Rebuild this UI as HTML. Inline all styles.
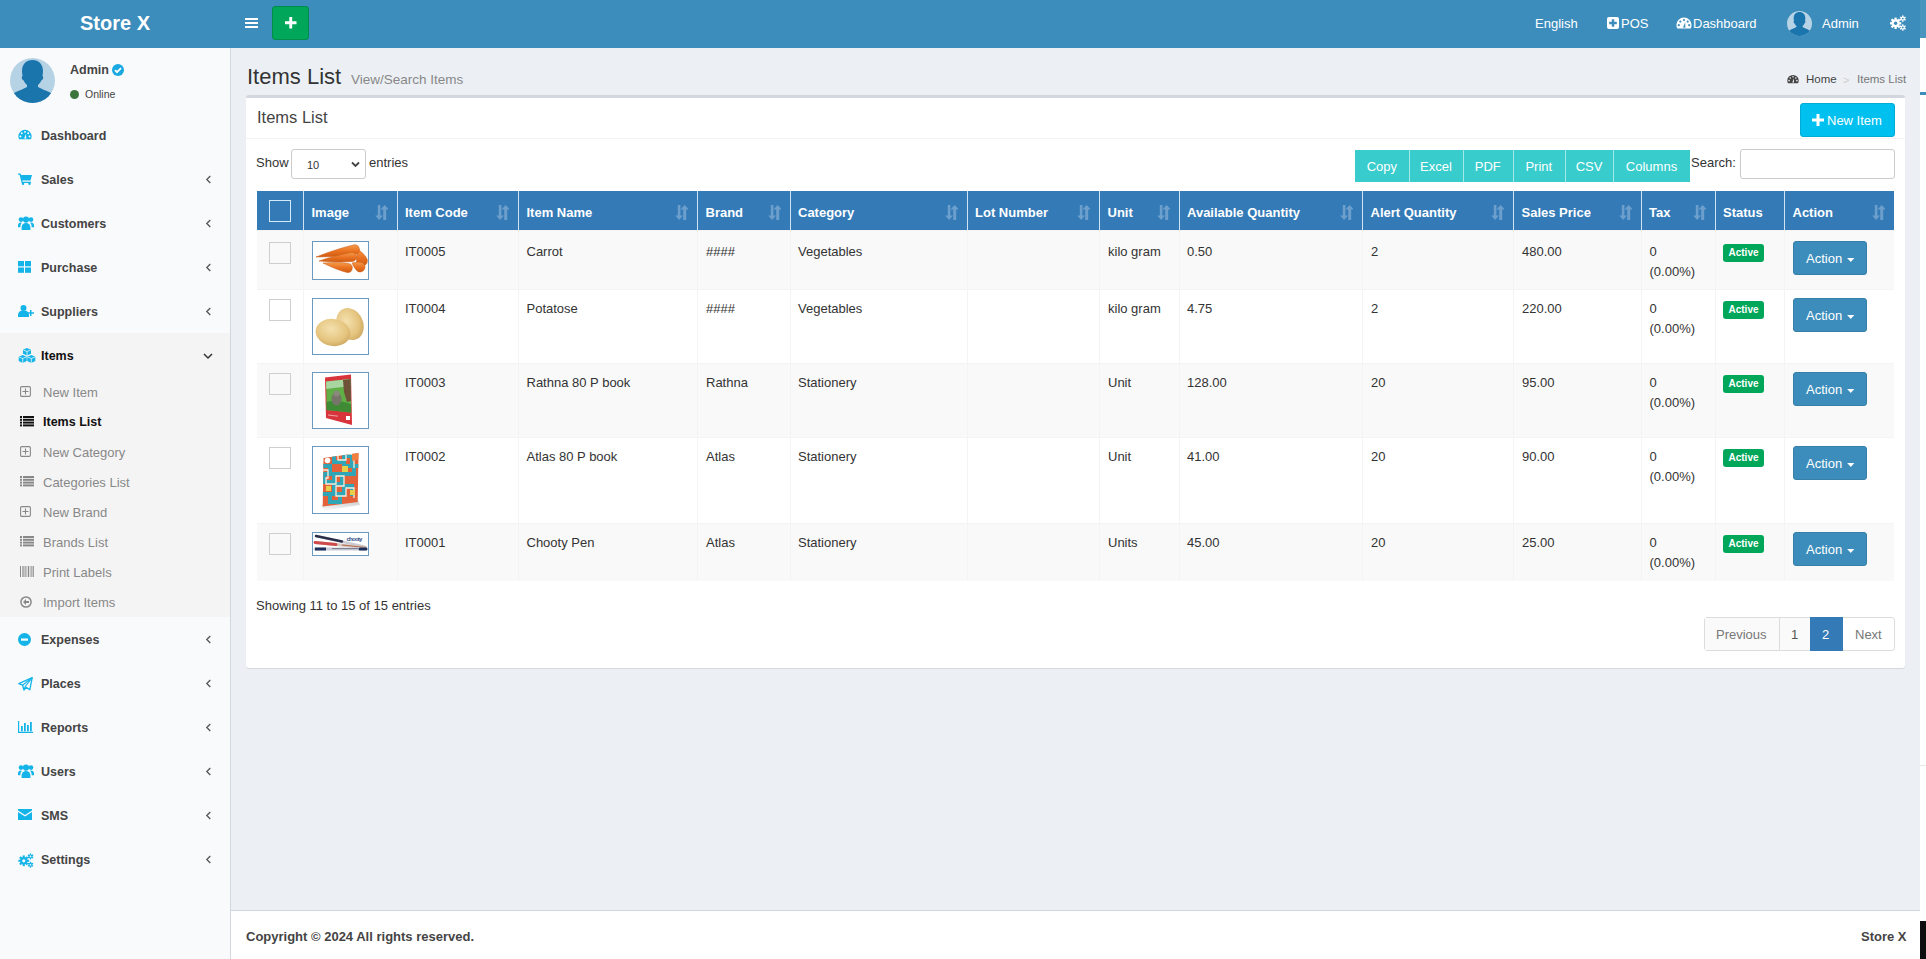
<!DOCTYPE html><html><head><meta charset="utf-8"><title>Items List</title><style>
*{box-sizing:border-box;margin:0;padding:0}
html,body{width:1926px;height:959px;overflow:hidden}
body{position:relative;background:#ecf0f5;font-family:"Liberation Sans",sans-serif;color:#333}
.a{position:absolute}
.t{line-height:1;white-space:nowrap}
</style></head><body><div class="a" style="left:0px;top:0px;width:1920px;height:48px;background:#3c8dbc"></div>
<div class="a t" style="left:80px;top:13px;font-size:20px;color:#fff;font-weight:bold;">Store X</div>
<div class="a" style="left:245px;top:18px;width:13px;height:2.4px;background:#fff"></div>
<div class="a" style="left:245px;top:22px;width:13px;height:2.4px;background:#fff"></div>
<div class="a" style="left:245px;top:26px;width:13px;height:2.4px;background:#fff"></div>
<div class="a" style="left:272px;top:6px;width:37px;height:34px;background:#00a65a;border-radius:3px;border:1px solid #008d4c"></div>
<svg class="a" style="left:285px;top:17px;" width="11.5" height="11.5" viewBox="0 0 12 12"><path d="M4.5 0h3v4.5H12v3H7.5V12h-3V7.5H0v-3h4.5z" fill="#fff"/></svg>
<div class="a t" style="left:1535px;top:17px;font-size:13px;color:#fff;font-weight:normal;">English</div>
<svg class="a" style="left:1607px;top:17px;" width="12" height="12" viewBox="0 0 12 12"><rect x="0" y="0" width="12" height="12" rx="2" fill="#fff"/><path d="M4.8 2.2h2.4v2.6h2.6v2.4H7.2v2.6H4.8V7.2H2.2V4.8h2.6z" fill="#3c8dbc"/></svg>
<div class="a t" style="left:1621px;top:17px;font-size:13px;color:#fff;font-weight:normal;">POS</div>
<svg class="a" style="left:1676px;top:17px;" width="16" height="12" viewBox="0 0 16 12"><path d="M8 0.5A7.6 7.6 0 0 0 0.4 8.1c0 1.3 .3 2.5 .9 3.4h13.4c.6-.9 .9-2.1 .9-3.4A7.6 7.6 0 0 0 8 0.5z" fill="#fff"/><circle cx="8" cy="3" r="1.1" fill="#3c8dbc"/><circle cx="4.3" cy="4.6" r="1.1" fill="#3c8dbc"/><circle cx="11.7" cy="4.6" r="1.1" fill="#3c8dbc"/><circle cx="2.8" cy="8.2" r="1.1" fill="#3c8dbc"/><circle cx="13.2" cy="8.2" r="1.1" fill="#3c8dbc"/><path d="M7 10.5L9.2 5.2L9.4 10.8z" fill="#3c8dbc"/></svg>
<div class="a t" style="left:1693px;top:17px;font-size:13px;color:#fff;font-weight:normal;">Dashboard</div>
<svg class="a" style="left:1787px;top:11px;" width="25" height="25" viewBox="0 0 45 45"><defs><clipPath id="c25"><circle cx="22.5" cy="22.5" r="22.5"/></clipPath></defs><g clip-path="url(#c25)"><rect width="45" height="45" fill="#b6d3e6"/><path d="M22.5 2C16 2 12 6.5 12 13c0 2 .2 3.5 .6 5-.8 .2-1 1-.7 2.2.3 1.2 1 2 1.7 2.1.8 2 2 3.6 3.4 4.7V29c-3 1.8-8 3.6-12 5.5C3 35.5 2 37 2 39v6h41v-6c0-2-1-3.5-3-4.5-4-1.9-9-3.7-12-5.5v-2c1.4-1.1 2.6-2.7 3.4-4.7.7-.1 1.4-.9 1.7-2.1.3-1.2.1-2-.7-2.2.4-1.5.6-3 .6-5C33 6.5 29 2 22.5 2z" fill="#1a75ad"/></g></svg>
<div class="a t" style="left:1822px;top:17px;font-size:13px;color:#fff;font-weight:normal;">Admin</div>
<svg class="a" style="left:1890px;top:15px;" width="16" height="16" viewBox="0 0 16 16"><circle cx="5.6" cy="8.3" r="4.0" fill="#fff"/><rect x="4.449999999999999" y="2.6000000000000005" width="2.3" height="2.2" fill="#fff" transform="rotate(0.0 5.6 8.3)"/><rect x="4.449999999999999" y="2.6000000000000005" width="2.3" height="2.2" fill="#fff" transform="rotate(45.0 5.6 8.3)"/><rect x="4.449999999999999" y="2.6000000000000005" width="2.3" height="2.2" fill="#fff" transform="rotate(90.0 5.6 8.3)"/><rect x="4.449999999999999" y="2.6000000000000005" width="2.3" height="2.2" fill="#fff" transform="rotate(135.0 5.6 8.3)"/><rect x="4.449999999999999" y="2.6000000000000005" width="2.3" height="2.2" fill="#fff" transform="rotate(180.0 5.6 8.3)"/><rect x="4.449999999999999" y="2.6000000000000005" width="2.3" height="2.2" fill="#fff" transform="rotate(225.0 5.6 8.3)"/><rect x="4.449999999999999" y="2.6000000000000005" width="2.3" height="2.2" fill="#fff" transform="rotate(270.0 5.6 8.3)"/><rect x="4.449999999999999" y="2.6000000000000005" width="2.3" height="2.2" fill="#fff" transform="rotate(315.0 5.6 8.3)"/><circle cx="5.6" cy="8.3" r="1.7" fill="#3c8dbc"/><circle cx="12.8" cy="3.6" r="2.1" fill="#fff"/><rect x="12.100000000000001" y="0.3999999999999999" width="1.4" height="1.6" fill="#fff" transform="rotate(0.0 12.8 3.6)"/><rect x="12.100000000000001" y="0.3999999999999999" width="1.4" height="1.6" fill="#fff" transform="rotate(60.0 12.8 3.6)"/><rect x="12.100000000000001" y="0.3999999999999999" width="1.4" height="1.6" fill="#fff" transform="rotate(120.0 12.8 3.6)"/><rect x="12.100000000000001" y="0.3999999999999999" width="1.4" height="1.6" fill="#fff" transform="rotate(180.0 12.8 3.6)"/><rect x="12.100000000000001" y="0.3999999999999999" width="1.4" height="1.6" fill="#fff" transform="rotate(240.0 12.8 3.6)"/><rect x="12.100000000000001" y="0.3999999999999999" width="1.4" height="1.6" fill="#fff" transform="rotate(300.0 12.8 3.6)"/><circle cx="12.8" cy="3.6" r="0.9" fill="#3c8dbc"/><circle cx="12.8" cy="12.5" r="2.1" fill="#fff"/><rect x="12.100000000000001" y="9.3" width="1.4" height="1.6" fill="#fff" transform="rotate(0.0 12.8 12.5)"/><rect x="12.100000000000001" y="9.3" width="1.4" height="1.6" fill="#fff" transform="rotate(60.0 12.8 12.5)"/><rect x="12.100000000000001" y="9.3" width="1.4" height="1.6" fill="#fff" transform="rotate(120.0 12.8 12.5)"/><rect x="12.100000000000001" y="9.3" width="1.4" height="1.6" fill="#fff" transform="rotate(180.0 12.8 12.5)"/><rect x="12.100000000000001" y="9.3" width="1.4" height="1.6" fill="#fff" transform="rotate(240.0 12.8 12.5)"/><rect x="12.100000000000001" y="9.3" width="1.4" height="1.6" fill="#fff" transform="rotate(300.0 12.8 12.5)"/><circle cx="12.8" cy="12.5" r="0.9" fill="#3c8dbc"/></svg>
<div class="a" style="left:1920px;top:0px;width:6px;height:38px;background:#4896be"></div>
<div class="a" style="left:1920px;top:38px;width:6px;height:921px;background:#fff"></div>
<div class="a" style="left:1920px;top:92px;width:6px;height:3px;background:#3c8dbc"></div>
<div class="a" style="left:1920px;top:765px;width:6px;height:1px;background:#e6e6e6"></div>
<div class="a" style="left:1920px;top:921px;width:6px;height:38px;background:#0d0d0f"></div>
<div class="a" style="left:0px;top:48px;width:230px;height:911px;background:#f9fafc"></div>
<div class="a" style="left:230px;top:48px;width:1px;height:911px;background:#d2d6de"></div>
<div class="a" style="left:0px;top:333px;width:230px;height:284px;background:#f4f4f5"></div>
<svg class="a" style="left:10px;top:58px;" width="45" height="45" viewBox="0 0 45 45"><defs><clipPath id="c45"><circle cx="22.5" cy="22.5" r="22.5"/></clipPath></defs><g clip-path="url(#c45)"><rect width="45" height="45" fill="#b6d3e6"/><path d="M22.5 2C16 2 12 6.5 12 13c0 2 .2 3.5 .6 5-.8 .2-1 1-.7 2.2.3 1.2 1 2 1.7 2.1.8 2 2 3.6 3.4 4.7V29c-3 1.8-8 3.6-12 5.5C3 35.5 2 37 2 39v6h41v-6c0-2-1-3.5-3-4.5-4-1.9-9-3.7-12-5.5v-2c1.4-1.1 2.6-2.7 3.4-4.7.7-.1 1.4-.9 1.7-2.1.3-1.2.1-2-.7-2.2.4-1.5.6-3 .6-5C33 6.5 29 2 22.5 2z" fill="#1a75ad"/></g></svg>
<div class="a t" style="left:70px;top:64px;font-size:12.5px;color:#444;font-weight:bold;">Admin</div>
<svg class="a" style="left:112px;top:64px;" width="12" height="12" viewBox="0 0 12 12"><circle cx="6" cy="6" r="6" fill="#1aa8e0"/><path d="M3 6.2l2 2 4-4" stroke="#fff" stroke-width="1.8" fill="none"/></svg>
<svg class="a" style="left:70px;top:90px;" width="9" height="9" viewBox="0 0 9 9"><circle cx="4.5" cy="4.5" r="4.5" fill="#3c763d"/></svg>
<div class="a t" style="left:85px;top:89px;font-size:10.5px;color:#444;font-weight:normal;">Online</div>
<svg class="a" style="left:18px;top:129px;" width="14" height="11" viewBox="0 0 16 12"><path d="M8 0.5A7.6 7.6 0 0 0 0.4 8.1c0 1.3 .3 2.5 .9 3.4h13.4c.6-.9 .9-2.1 .9-3.4A7.6 7.6 0 0 0 8 0.5z" fill="#14b4e8"/><circle cx="8" cy="3" r="1.1" fill="#f9fafc"/><circle cx="4.3" cy="4.6" r="1.1" fill="#f9fafc"/><circle cx="11.7" cy="4.6" r="1.1" fill="#f9fafc"/><circle cx="2.8" cy="8.2" r="1.1" fill="#f9fafc"/><circle cx="13.2" cy="8.2" r="1.1" fill="#f9fafc"/><path d="M7 10.5L9.2 5.2L9.4 10.8z" fill="#f9fafc"/></svg>
<div class="a t" style="left:41px;top:130px;font-size:12.5px;color:#444;font-weight:bold;">Dashboard</div>
<svg class="a" style="left:18px;top:173px;" width="14" height="12" viewBox="0 0 14 12"><path d="M0 0.5h2.5l.6 1.5H14l-1.5 5.5H4.2l.4 1.2H13v1.3H3.6L1.6 1.8H0z" fill="#14b4e8"/><circle cx="5" cy="10.8" r="1.2" fill="#14b4e8"/><circle cx="11.5" cy="10.8" r="1.2" fill="#14b4e8"/></svg>
<div class="a t" style="left:41px;top:174px;font-size:12.5px;color:#444;font-weight:bold;">Sales</div>
<svg class="a" style="left:204.5px;top:174.5px;" width="7" height="9" viewBox="0 0 7 9"><path d="M5.3 1L1.8 4.5l3.5 3.5" stroke="#555" stroke-width="1.3" fill="none"/></svg>
<svg class="a" style="left:18px;top:216px;" width="16" height="14" viewBox="0 0 16 14"><circle cx="8" cy="3.6" r="3.1" fill="#14b4e8"/><circle cx="3" cy="3.6" r="2.3" fill="#14b4e8"/><circle cx="13" cy="3.6" r="2.3" fill="#14b4e8"/><path d="M3.6 14v-2.6a4.4 4.4 0 0 1 8.8 0V14z" fill="#14b4e8"/><path d="M0 11.2V9.3a2.7 2.7 0 0 1 3.8-2.5 5.5 5.5 0 0 0-1.4 4.4z" fill="#14b4e8"/><path d="M16 11.2V9.3a2.7 2.7 0 0 0-3.8-2.5 5.5 5.5 0 0 1 1.4 4.4z" fill="#14b4e8"/></svg>
<div class="a t" style="left:41px;top:218px;font-size:12.5px;color:#444;font-weight:bold;">Customers</div>
<svg class="a" style="left:204.5px;top:218.5px;" width="7" height="9" viewBox="0 0 7 9"><path d="M5.3 1L1.8 4.5l3.5 3.5" stroke="#555" stroke-width="1.3" fill="none"/></svg>
<svg class="a" style="left:18px;top:261px;" width="13" height="12" viewBox="0 0 13 12"><rect x="0" y="0" width="6" height="5.3" fill="#14b4e8"/><rect x="7" y="0" width="6" height="5.3" fill="#14b4e8"/><rect x="0" y="6.5" width="6" height="5.3" fill="#14b4e8"/><rect x="7" y="6.5" width="6" height="5.3" fill="#14b4e8"/></svg>
<div class="a t" style="left:41px;top:262px;font-size:12.5px;color:#444;font-weight:bold;">Purchase</div>
<svg class="a" style="left:204.5px;top:262.5px;" width="7" height="9" viewBox="0 0 7 9"><path d="M5.3 1L1.8 4.5l3.5 3.5" stroke="#555" stroke-width="1.3" fill="none"/></svg>
<svg class="a" style="left:18px;top:305px;" width="16" height="12" viewBox="0 0 16 12"><circle cx="5.5" cy="3" r="3" fill="#14b4e8"/><path d="M0 12V10a4.5 4.5 0 0 1 4.5-4.5h2A4.5 4.5 0 0 1 11 10v2z" fill="#14b4e8"/><path d="M12 5h1.5v2.3H16v1.4h-2.5V11H12V8.7H9.7V7.3H12z" fill="#14b4e8"/></svg>
<div class="a t" style="left:41px;top:306px;font-size:12.5px;color:#444;font-weight:bold;">Suppliers</div>
<svg class="a" style="left:204.5px;top:306.5px;" width="7" height="9" viewBox="0 0 7 9"><path d="M5.3 1L1.8 4.5l3.5 3.5" stroke="#555" stroke-width="1.3" fill="none"/></svg>
<svg class="a" style="left:18px;top:348px;" width="18" height="16" viewBox="0 0 18 16"><path d="M9 0l4 1.7v4.1L9 7.5 5 5.8V1.7z" fill="#14b4e8"/><path d="M4.7 7l4 1.7v4.3L4.7 15 .7 13V8.7z" fill="#14b4e8"/><path d="M13.3 7l4 1.7v4.3l-4 2-4-2V8.7z" fill="#14b4e8"/><path d="M5.4 2l3.6 1.5 3.6-1.5M1.1 9l3.6 1.5 3.6-1.5M9.7 9l3.6 1.5 3.6-1.5M9 3.5v4M4.7 10.5v4.5M13.3 10.5v4.5" stroke="#f4f4f5" stroke-width=".8" fill="none"/></svg>
<div class="a t" style="left:41px;top:350px;font-size:12.5px;color:#111;font-weight:bold;">Items</div>
<svg class="a" style="left:203px;top:351.5px;" width="10" height="8" viewBox="0 0 10 8"><path d="M1 2l4 4 4-4" stroke="#333" stroke-width="1.5" fill="none"/></svg>
<svg class="a" style="left:18px;top:633px;" width="13" height="13" viewBox="0 0 13 13"><circle cx="6.5" cy="6.5" r="6.5" fill="#14b4e8"/><rect x="3" y="5.5" width="7" height="2.2" fill="#fff"/></svg>
<div class="a t" style="left:41px;top:634px;font-size:12.5px;color:#444;font-weight:bold;">Expenses</div>
<svg class="a" style="left:204.5px;top:634.5px;" width="7" height="9" viewBox="0 0 7 9"><path d="M5.3 1L1.8 4.5l3.5 3.5" stroke="#555" stroke-width="1.3" fill="none"/></svg>
<svg class="a" style="left:18px;top:677px;" width="15" height="14" viewBox="0 0 15 14"><path d="M14.2 .6L.8 6.6l3.8 1.6 1.4 4.8 2.2-2.8 3.6 2.6z" fill="none" stroke="#14b4e8" stroke-width="1.3" stroke-linejoin="round"/><path d="M4.6 8.2L14.2 .6 7.2 9.4l-1.2 3.6" fill="none" stroke="#14b4e8" stroke-width="1.1"/></svg>
<div class="a t" style="left:41px;top:678px;font-size:12.5px;color:#444;font-weight:bold;">Places</div>
<svg class="a" style="left:204.5px;top:678.5px;" width="7" height="9" viewBox="0 0 7 9"><path d="M5.3 1L1.8 4.5l3.5 3.5" stroke="#555" stroke-width="1.3" fill="none"/></svg>
<svg class="a" style="left:18px;top:721px;" width="15" height="12" viewBox="0 0 15 12"><path d="M.6 0v11.4H15" fill="none" stroke="#14b4e8" stroke-width="1.2"/><rect x="3" y="5" width="1.8" height="5.3" fill="#14b4e8"/><rect x="6" y="2" width="1.8" height="8.3" fill="#14b4e8"/><rect x="9" y="4" width="1.8" height="6.3" fill="#14b4e8"/><rect x="12" y="1" width="1.8" height="9.3" fill="#14b4e8"/></svg>
<div class="a t" style="left:41px;top:722px;font-size:12.5px;color:#444;font-weight:bold;">Reports</div>
<svg class="a" style="left:204.5px;top:722.5px;" width="7" height="9" viewBox="0 0 7 9"><path d="M5.3 1L1.8 4.5l3.5 3.5" stroke="#555" stroke-width="1.3" fill="none"/></svg>
<svg class="a" style="left:18px;top:764px;" width="16" height="14" viewBox="0 0 16 14"><circle cx="8" cy="3.6" r="3.1" fill="#14b4e8"/><circle cx="3" cy="3.6" r="2.3" fill="#14b4e8"/><circle cx="13" cy="3.6" r="2.3" fill="#14b4e8"/><path d="M3.6 14v-2.6a4.4 4.4 0 0 1 8.8 0V14z" fill="#14b4e8"/><path d="M0 11.2V9.3a2.7 2.7 0 0 1 3.8-2.5 5.5 5.5 0 0 0-1.4 4.4z" fill="#14b4e8"/><path d="M16 11.2V9.3a2.7 2.7 0 0 0-3.8-2.5 5.5 5.5 0 0 1 1.4 4.4z" fill="#14b4e8"/></svg>
<div class="a t" style="left:41px;top:766px;font-size:12.5px;color:#444;font-weight:bold;">Users</div>
<svg class="a" style="left:204.5px;top:766.5px;" width="7" height="9" viewBox="0 0 7 9"><path d="M5.3 1L1.8 4.5l3.5 3.5" stroke="#555" stroke-width="1.3" fill="none"/></svg>
<svg class="a" style="left:18px;top:809px;" width="14" height="11" viewBox="0 0 14 11"><path d="M0 0h14v1.5L7 6 0 1.5z" fill="#14b4e8"/><path d="M0 3l7 4.5L14 3v8H0z" fill="#14b4e8"/></svg>
<div class="a t" style="left:41px;top:810px;font-size:12.5px;color:#444;font-weight:bold;">SMS</div>
<svg class="a" style="left:204.5px;top:810.5px;" width="7" height="9" viewBox="0 0 7 9"><path d="M5.3 1L1.8 4.5l3.5 3.5" stroke="#555" stroke-width="1.3" fill="none"/></svg>
<svg class="a" style="left:18px;top:853px;" width="16" height="15" viewBox="0 0 16 16"><circle cx="5.6" cy="8.3" r="4.0" fill="#14b4e8"/><rect x="4.449999999999999" y="2.6000000000000005" width="2.3" height="2.2" fill="#14b4e8" transform="rotate(0.0 5.6 8.3)"/><rect x="4.449999999999999" y="2.6000000000000005" width="2.3" height="2.2" fill="#14b4e8" transform="rotate(45.0 5.6 8.3)"/><rect x="4.449999999999999" y="2.6000000000000005" width="2.3" height="2.2" fill="#14b4e8" transform="rotate(90.0 5.6 8.3)"/><rect x="4.449999999999999" y="2.6000000000000005" width="2.3" height="2.2" fill="#14b4e8" transform="rotate(135.0 5.6 8.3)"/><rect x="4.449999999999999" y="2.6000000000000005" width="2.3" height="2.2" fill="#14b4e8" transform="rotate(180.0 5.6 8.3)"/><rect x="4.449999999999999" y="2.6000000000000005" width="2.3" height="2.2" fill="#14b4e8" transform="rotate(225.0 5.6 8.3)"/><rect x="4.449999999999999" y="2.6000000000000005" width="2.3" height="2.2" fill="#14b4e8" transform="rotate(270.0 5.6 8.3)"/><rect x="4.449999999999999" y="2.6000000000000005" width="2.3" height="2.2" fill="#14b4e8" transform="rotate(315.0 5.6 8.3)"/><circle cx="5.6" cy="8.3" r="1.7" fill="#f9fafc"/><circle cx="12.8" cy="3.6" r="2.1" fill="#14b4e8"/><rect x="12.100000000000001" y="0.3999999999999999" width="1.4" height="1.6" fill="#14b4e8" transform="rotate(0.0 12.8 3.6)"/><rect x="12.100000000000001" y="0.3999999999999999" width="1.4" height="1.6" fill="#14b4e8" transform="rotate(60.0 12.8 3.6)"/><rect x="12.100000000000001" y="0.3999999999999999" width="1.4" height="1.6" fill="#14b4e8" transform="rotate(120.0 12.8 3.6)"/><rect x="12.100000000000001" y="0.3999999999999999" width="1.4" height="1.6" fill="#14b4e8" transform="rotate(180.0 12.8 3.6)"/><rect x="12.100000000000001" y="0.3999999999999999" width="1.4" height="1.6" fill="#14b4e8" transform="rotate(240.0 12.8 3.6)"/><rect x="12.100000000000001" y="0.3999999999999999" width="1.4" height="1.6" fill="#14b4e8" transform="rotate(300.0 12.8 3.6)"/><circle cx="12.8" cy="3.6" r="0.9" fill="#f9fafc"/><circle cx="12.8" cy="12.5" r="2.1" fill="#14b4e8"/><rect x="12.100000000000001" y="9.3" width="1.4" height="1.6" fill="#14b4e8" transform="rotate(0.0 12.8 12.5)"/><rect x="12.100000000000001" y="9.3" width="1.4" height="1.6" fill="#14b4e8" transform="rotate(60.0 12.8 12.5)"/><rect x="12.100000000000001" y="9.3" width="1.4" height="1.6" fill="#14b4e8" transform="rotate(120.0 12.8 12.5)"/><rect x="12.100000000000001" y="9.3" width="1.4" height="1.6" fill="#14b4e8" transform="rotate(180.0 12.8 12.5)"/><rect x="12.100000000000001" y="9.3" width="1.4" height="1.6" fill="#14b4e8" transform="rotate(240.0 12.8 12.5)"/><rect x="12.100000000000001" y="9.3" width="1.4" height="1.6" fill="#14b4e8" transform="rotate(300.0 12.8 12.5)"/><circle cx="12.8" cy="12.5" r="0.9" fill="#f9fafc"/></svg>
<div class="a t" style="left:41px;top:854px;font-size:12.5px;color:#444;font-weight:bold;">Settings</div>
<svg class="a" style="left:204.5px;top:854.5px;" width="7" height="9" viewBox="0 0 7 9"><path d="M5.3 1L1.8 4.5l3.5 3.5" stroke="#555" stroke-width="1.3" fill="none"/></svg>
<svg class="a" style="left:20px;top:386px;" width="11" height="11" viewBox="0 0 11 11"><rect x=".6" y=".6" width="9.8" height="9.8" rx="1.2" fill="none" stroke="#888" stroke-width="1.1"/><path d="M5.5 2.5v6M2.5 5.5h6" stroke="#888" stroke-width="1.1"/></svg>
<div class="a t" style="left:43px;top:386px;font-size:13px;color:#888;font-weight:normal;">New Item</div>
<svg class="a" style="left:20px;top:416px;" width="14" height="11" viewBox="0 0 14 11"><rect x="0" y="0.0" width="2" height="2" fill="#111"/><rect x="3" y="0.0" width="11" height="2" fill="#111"/><rect x="0" y="2.8" width="2" height="2" fill="#111"/><rect x="3" y="2.8" width="11" height="2" fill="#111"/><rect x="0" y="5.6" width="2" height="2" fill="#111"/><rect x="3" y="5.6" width="11" height="2" fill="#111"/><rect x="0" y="8.399999999999999" width="2" height="2" fill="#111"/><rect x="3" y="8.399999999999999" width="11" height="2" fill="#111"/></svg>
<div class="a t" style="left:43px;top:416px;font-size:12.5px;color:#111;font-weight:bold;">Items List</div>
<svg class="a" style="left:20px;top:446px;" width="11" height="11" viewBox="0 0 11 11"><rect x=".6" y=".6" width="9.8" height="9.8" rx="1.2" fill="none" stroke="#888" stroke-width="1.1"/><path d="M5.5 2.5v6M2.5 5.5h6" stroke="#888" stroke-width="1.1"/></svg>
<div class="a t" style="left:43px;top:446px;font-size:13px;color:#888;font-weight:normal;">New Category</div>
<svg class="a" style="left:20px;top:476px;" width="14" height="11" viewBox="0 0 14 11"><rect x="0" y="0.0" width="2" height="2" fill="#888"/><rect x="3" y="0.0" width="11" height="2" fill="#888"/><rect x="0" y="2.8" width="2" height="2" fill="#888"/><rect x="3" y="2.8" width="11" height="2" fill="#888"/><rect x="0" y="5.6" width="2" height="2" fill="#888"/><rect x="3" y="5.6" width="11" height="2" fill="#888"/><rect x="0" y="8.399999999999999" width="2" height="2" fill="#888"/><rect x="3" y="8.399999999999999" width="11" height="2" fill="#888"/></svg>
<div class="a t" style="left:43px;top:476px;font-size:13px;color:#888;font-weight:normal;">Categories List</div>
<svg class="a" style="left:20px;top:506px;" width="11" height="11" viewBox="0 0 11 11"><rect x=".6" y=".6" width="9.8" height="9.8" rx="1.2" fill="none" stroke="#888" stroke-width="1.1"/><path d="M5.5 2.5v6M2.5 5.5h6" stroke="#888" stroke-width="1.1"/></svg>
<div class="a t" style="left:43px;top:506px;font-size:13px;color:#888;font-weight:normal;">New Brand</div>
<svg class="a" style="left:20px;top:536px;" width="14" height="11" viewBox="0 0 14 11"><rect x="0" y="0.0" width="2" height="2" fill="#888"/><rect x="3" y="0.0" width="11" height="2" fill="#888"/><rect x="0" y="2.8" width="2" height="2" fill="#888"/><rect x="3" y="2.8" width="11" height="2" fill="#888"/><rect x="0" y="5.6" width="2" height="2" fill="#888"/><rect x="3" y="5.6" width="11" height="2" fill="#888"/><rect x="0" y="8.399999999999999" width="2" height="2" fill="#888"/><rect x="3" y="8.399999999999999" width="11" height="2" fill="#888"/></svg>
<div class="a t" style="left:43px;top:536px;font-size:13px;color:#888;font-weight:normal;">Brands List</div>
<svg class="a" style="left:20px;top:566px;" width="14" height="11" viewBox="0 0 14 11"><rect x="0" y="0" width="1" height="11" fill="#888"/><rect x="2" y="0" width="0.6" height="11" fill="#888"/><rect x="3.4" y="0" width="1" height="11" fill="#888"/><rect x="5.2" y="0" width="0.6" height="11" fill="#888"/><rect x="6.6" y="0" width="0.6" height="11" fill="#888"/><rect x="8" y="0" width="1" height="11" fill="#888"/><rect x="9.8" y="0" width="0.6" height="11" fill="#888"/><rect x="11.2" y="0" width="0.6" height="11" fill="#888"/><rect x="12.6" y="0" width="1.2" height="11" fill="#888"/></svg>
<div class="a t" style="left:43px;top:566px;font-size:13px;color:#888;font-weight:normal;">Print Labels</div>
<svg class="a" style="left:20px;top:596px;" width="12" height="12" viewBox="0 0 12 12"><circle cx="6" cy="6" r="5.1" fill="none" stroke="#888" stroke-width="1.5"/><path d="M3 6l3-3v2h3v2H6v2z" fill="#888"/></svg>
<div class="a t" style="left:43px;top:596px;font-size:13px;color:#888;font-weight:normal;">Import Items</div>
<div class="a t" style="left:247px;top:66px;font-size:22px;color:#333;font-weight:normal;">Items List</div>
<div class="a t" style="left:351px;top:73px;font-size:13.5px;color:#888;font-weight:normal;">View/Search Items</div>
<svg class="a" style="left:1787px;top:74px;" width="12" height="10" viewBox="0 0 16 12"><path d="M8 0.5A7.6 7.6 0 0 0 0.4 8.1c0 1.3 .3 2.5 .9 3.4h13.4c.6-.9 .9-2.1 .9-3.4A7.6 7.6 0 0 0 8 0.5z" fill="#444"/><circle cx="8" cy="3" r="1.1" fill="#ecf0f5"/><circle cx="4.3" cy="4.6" r="1.1" fill="#ecf0f5"/><circle cx="11.7" cy="4.6" r="1.1" fill="#ecf0f5"/><circle cx="2.8" cy="8.2" r="1.1" fill="#ecf0f5"/><circle cx="13.2" cy="8.2" r="1.1" fill="#ecf0f5"/><path d="M7 10.5L9.2 5.2L9.4 10.8z" fill="#ecf0f5"/></svg>
<div class="a t" style="left:1806px;top:74px;font-size:11.5px;color:#444;font-weight:normal;">Home</div>
<div class="a t" style="left:1843px;top:74.5px;font-size:11px;color:#ccc;font-weight:normal;">&gt;</div>
<div class="a t" style="left:1857px;top:74px;font-size:11.5px;color:#777;font-weight:normal;">Items List</div>
<div class="a" style="left:246px;top:95px;width:1659px;height:573px;background:#fff;border-top:3px solid #d2d6de;border-radius:3px;box-shadow:0 1px 1px rgba(0,0,0,.1)"></div>
<div class="a t" style="left:257px;top:109px;font-size:16.5px;color:#444;font-weight:normal;">Items List</div>
<div class="a" style="left:246px;top:138px;width:1659px;height:1px;background:#f4f4f4"></div>
<div class="a" style="left:1800px;top:103px;width:95px;height:34px;background:#00c0ef;border:1px solid #00acd6;border-radius:3px"></div>
<svg class="a" style="left:1812px;top:113.5px;" width="12" height="12" viewBox="0 0 12 12"><path d="M4.5 0h3v4.5H12v3H7.5V12h-3V7.5H0v-3h4.5z" fill="#fff"/></svg>
<div class="a t" style="left:1827px;top:114px;font-size:13px;color:#fff;font-weight:normal;">New Item</div>
<div class="a t" style="left:256px;top:156px;font-size:13px;color:#333;font-weight:normal;">Show</div>
<div class="a" style="left:291px;top:149px;width:75px;height:30px;background:#fff;border:1px solid #cbcbcb;border-radius:3px"></div>
<div class="a t" style="left:307px;top:160px;font-size:11px;color:#333;font-weight:normal;">10</div>
<svg class="a" style="left:351px;top:161px;" width="9" height="7" viewBox="0 0 9 7"><path d="M1 1.5l3.5 3.5L8 1.5" stroke="#444" stroke-width="1.8" fill="none"/></svg>
<div class="a t" style="left:369px;top:156px;font-size:13px;color:#333;font-weight:normal;">entries</div>
<div class="a" style="left:1355px;top:150px;width:335px;height:32px;background:#39cccc"></div>
<div class="a" style="left:1409px;top:150px;width:1px;height:32px;background:rgba(255,255,255,.55)"></div>
<div class="a" style="left:1463px;top:150px;width:1px;height:32px;background:rgba(255,255,255,.55)"></div>
<div class="a" style="left:1512.5px;top:150px;width:1px;height:32px;background:rgba(255,255,255,.55)"></div>
<div class="a" style="left:1565px;top:150px;width:1px;height:32px;background:rgba(255,255,255,.55)"></div>
<div class="a" style="left:1613px;top:150px;width:1px;height:32px;background:rgba(255,255,255,.55)"></div>
<div class="a t" style="left:1354.8px;top:160px;width:54.200000000000045px;text-align:center;font-size:13px;color:#fff">Copy</div>
<div class="a t" style="left:1409px;top:160px;width:54px;text-align:center;font-size:13px;color:#fff">Excel</div>
<div class="a t" style="left:1463px;top:160px;width:49.5px;text-align:center;font-size:13px;color:#fff">PDF</div>
<div class="a t" style="left:1512.5px;top:160px;width:52.5px;text-align:center;font-size:13px;color:#fff">Print</div>
<div class="a t" style="left:1565px;top:160px;width:48px;text-align:center;font-size:13px;color:#fff">CSV</div>
<div class="a t" style="left:1613px;top:160px;width:77px;text-align:center;font-size:13px;color:#fff">Columns</div>
<div class="a t" style="left:1691px;top:156px;font-size:13px;color:#333;font-weight:normal;">Search:</div>
<div class="a" style="left:1740px;top:149px;width:155px;height:30px;background:#fff;border:1px solid #cbcbcb;border-radius:3px"></div>
<div class="a" style="left:257px;top:191px;width:1637px;height:39px;background:#337ab7"></div>
<div class="a" style="left:303px;top:191px;width:1px;height:39px;background:#cfe3f3"></div>
<div class="a" style="left:396.5px;top:191px;width:1px;height:39px;background:#cfe3f3"></div>
<div class="a" style="left:518px;top:191px;width:1px;height:39px;background:#cfe3f3"></div>
<div class="a" style="left:697px;top:191px;width:1px;height:39px;background:#cfe3f3"></div>
<div class="a" style="left:789.5px;top:191px;width:1px;height:39px;background:#cfe3f3"></div>
<div class="a" style="left:966.5px;top:191px;width:1px;height:39px;background:#cfe3f3"></div>
<div class="a" style="left:1099px;top:191px;width:1px;height:39px;background:#cfe3f3"></div>
<div class="a" style="left:1178.5px;top:191px;width:1px;height:39px;background:#cfe3f3"></div>
<div class="a" style="left:1362px;top:191px;width:1px;height:39px;background:#cfe3f3"></div>
<div class="a" style="left:1513px;top:191px;width:1px;height:39px;background:#cfe3f3"></div>
<div class="a" style="left:1640.5px;top:191px;width:1px;height:39px;background:#cfe3f3"></div>
<div class="a" style="left:1714.5px;top:191px;width:1px;height:39px;background:#cfe3f3"></div>
<div class="a" style="left:1784px;top:191px;width:1px;height:39px;background:#cfe3f3"></div>
<div class="a" style="left:269px;top:200px;width:22px;height:22px;border:1.3px solid #d5eafa"></div>
<div class="a t" style="left:311.5px;top:206px;font-size:13px;color:#fff;font-weight:bold;">Image</div>
<svg class="a" style="left:374.5px;top:205px;" width="13" height="15" viewBox="0 0 13 15"><path d="M2.8 0h2.6v10.5H8L4.1 15 .2 10.5h2.6z" fill="#6c9fcc"/><path d="M8.2 15h3v-10.5H14L9.7 0 5.4 4.5h2.8z" fill="#6c9fcc"/></svg>
<div class="a t" style="left:405.0px;top:206px;font-size:13px;color:#fff;font-weight:bold;">Item Code</div>
<svg class="a" style="left:496px;top:205px;" width="13" height="15" viewBox="0 0 13 15"><path d="M2.8 0h2.6v10.5H8L4.1 15 .2 10.5h2.6z" fill="#6c9fcc"/><path d="M8.2 15h3v-10.5H14L9.7 0 5.4 4.5h2.8z" fill="#6c9fcc"/></svg>
<div class="a t" style="left:526.5px;top:206px;font-size:13px;color:#fff;font-weight:bold;">Item Name</div>
<svg class="a" style="left:675px;top:205px;" width="13" height="15" viewBox="0 0 13 15"><path d="M2.8 0h2.6v10.5H8L4.1 15 .2 10.5h2.6z" fill="#6c9fcc"/><path d="M8.2 15h3v-10.5H14L9.7 0 5.4 4.5h2.8z" fill="#6c9fcc"/></svg>
<div class="a t" style="left:705.5px;top:206px;font-size:13px;color:#fff;font-weight:bold;">Brand</div>
<svg class="a" style="left:767.5px;top:205px;" width="13" height="15" viewBox="0 0 13 15"><path d="M2.8 0h2.6v10.5H8L4.1 15 .2 10.5h2.6z" fill="#6c9fcc"/><path d="M8.2 15h3v-10.5H14L9.7 0 5.4 4.5h2.8z" fill="#6c9fcc"/></svg>
<div class="a t" style="left:798.0px;top:206px;font-size:13px;color:#fff;font-weight:bold;">Category</div>
<svg class="a" style="left:944.5px;top:205px;" width="13" height="15" viewBox="0 0 13 15"><path d="M2.8 0h2.6v10.5H8L4.1 15 .2 10.5h2.6z" fill="#6c9fcc"/><path d="M8.2 15h3v-10.5H14L9.7 0 5.4 4.5h2.8z" fill="#6c9fcc"/></svg>
<div class="a t" style="left:975.0px;top:206px;font-size:13px;color:#fff;font-weight:bold;">Lot Number</div>
<svg class="a" style="left:1077px;top:205px;" width="13" height="15" viewBox="0 0 13 15"><path d="M2.8 0h2.6v10.5H8L4.1 15 .2 10.5h2.6z" fill="#6c9fcc"/><path d="M8.2 15h3v-10.5H14L9.7 0 5.4 4.5h2.8z" fill="#6c9fcc"/></svg>
<div class="a t" style="left:1107.5px;top:206px;font-size:13px;color:#fff;font-weight:bold;">Unit</div>
<svg class="a" style="left:1156.5px;top:205px;" width="13" height="15" viewBox="0 0 13 15"><path d="M2.8 0h2.6v10.5H8L4.1 15 .2 10.5h2.6z" fill="#6c9fcc"/><path d="M8.2 15h3v-10.5H14L9.7 0 5.4 4.5h2.8z" fill="#6c9fcc"/></svg>
<div class="a t" style="left:1187.0px;top:206px;font-size:13px;color:#fff;font-weight:bold;">Available Quantity</div>
<svg class="a" style="left:1340px;top:205px;" width="13" height="15" viewBox="0 0 13 15"><path d="M2.8 0h2.6v10.5H8L4.1 15 .2 10.5h2.6z" fill="#6c9fcc"/><path d="M8.2 15h3v-10.5H14L9.7 0 5.4 4.5h2.8z" fill="#6c9fcc"/></svg>
<div class="a t" style="left:1370.5px;top:206px;font-size:13px;color:#fff;font-weight:bold;">Alert Quantity</div>
<svg class="a" style="left:1491px;top:205px;" width="13" height="15" viewBox="0 0 13 15"><path d="M2.8 0h2.6v10.5H8L4.1 15 .2 10.5h2.6z" fill="#6c9fcc"/><path d="M8.2 15h3v-10.5H14L9.7 0 5.4 4.5h2.8z" fill="#6c9fcc"/></svg>
<div class="a t" style="left:1521.5px;top:206px;font-size:13px;color:#fff;font-weight:bold;">Sales Price</div>
<svg class="a" style="left:1618.5px;top:205px;" width="13" height="15" viewBox="0 0 13 15"><path d="M2.8 0h2.6v10.5H8L4.1 15 .2 10.5h2.6z" fill="#6c9fcc"/><path d="M8.2 15h3v-10.5H14L9.7 0 5.4 4.5h2.8z" fill="#6c9fcc"/></svg>
<div class="a t" style="left:1649.0px;top:206px;font-size:13px;color:#fff;font-weight:bold;">Tax</div>
<svg class="a" style="left:1692.5px;top:205px;" width="13" height="15" viewBox="0 0 13 15"><path d="M2.8 0h2.6v10.5H8L4.1 15 .2 10.5h2.6z" fill="#6c9fcc"/><path d="M8.2 15h3v-10.5H14L9.7 0 5.4 4.5h2.8z" fill="#6c9fcc"/></svg>
<div class="a t" style="left:1723.0px;top:206px;font-size:13px;color:#fff;font-weight:bold;">Status</div>
<div class="a t" style="left:1792.5px;top:206px;font-size:13px;color:#fff;font-weight:bold;">Action</div>
<svg class="a" style="left:1872px;top:205px;" width="13" height="15" viewBox="0 0 13 15"><path d="M2.8 0h2.6v10.5H8L4.1 15 .2 10.5h2.6z" fill="#6c9fcc"/><path d="M8.2 15h3v-10.5H14L9.7 0 5.4 4.5h2.8z" fill="#6c9fcc"/></svg>
<div class="a" style="left:257px;top:230px;width:1637px;height:59px;background:#f9f9f9"></div>
<div class="a" style="left:257px;top:230px;width:1637px;height:1px;background:#f4f4f4"></div>
<div class="a" style="left:303px;top:230px;width:1px;height:59px;background:#f4f4f4"></div>
<div class="a" style="left:396.5px;top:230px;width:1px;height:59px;background:#f4f4f4"></div>
<div class="a" style="left:518px;top:230px;width:1px;height:59px;background:#f4f4f4"></div>
<div class="a" style="left:697px;top:230px;width:1px;height:59px;background:#f4f4f4"></div>
<div class="a" style="left:789.5px;top:230px;width:1px;height:59px;background:#f4f4f4"></div>
<div class="a" style="left:966.5px;top:230px;width:1px;height:59px;background:#f4f4f4"></div>
<div class="a" style="left:1099px;top:230px;width:1px;height:59px;background:#f4f4f4"></div>
<div class="a" style="left:1178.5px;top:230px;width:1px;height:59px;background:#f4f4f4"></div>
<div class="a" style="left:1362px;top:230px;width:1px;height:59px;background:#f4f4f4"></div>
<div class="a" style="left:1513px;top:230px;width:1px;height:59px;background:#f4f4f4"></div>
<div class="a" style="left:1640.5px;top:230px;width:1px;height:59px;background:#f4f4f4"></div>
<div class="a" style="left:1714.5px;top:230px;width:1px;height:59px;background:#f4f4f4"></div>
<div class="a" style="left:1784px;top:230px;width:1px;height:59px;background:#f4f4f4"></div>
<div class="a" style="left:269px;top:242px;width:22px;height:22px;border:1px solid #cfcfcf"></div>
<div class="a t" style="left:405px;top:244.5px;font-size:13px;color:#333;font-weight:normal;">IT0005</div>
<div class="a t" style="left:526.5px;top:244.5px;font-size:13px;color:#333;font-weight:normal;">Carrot</div>
<div class="a t" style="left:706px;top:244.5px;font-size:13px;color:#333;font-weight:normal;">####</div>
<div class="a t" style="left:798px;top:244.5px;font-size:13px;color:#333;font-weight:normal;">Vegetables</div>
<div class="a t" style="left:1108px;top:244.5px;font-size:13px;color:#333;font-weight:normal;">kilo gram</div>
<div class="a t" style="left:1187px;top:244.5px;font-size:13px;color:#333;font-weight:normal;">0.50</div>
<div class="a t" style="left:1371px;top:244.5px;font-size:13px;color:#333;font-weight:normal;">2</div>
<div class="a t" style="left:1522px;top:244.5px;font-size:13px;color:#333;font-weight:normal;">480.00</div>
<div class="a t" style="left:1649.5px;top:244.5px;font-size:13px;color:#333;font-weight:normal;">0</div>
<div class="a t" style="left:1649.5px;top:264.5px;font-size:13px;color:#333;font-weight:normal;">(0.00%)</div>
<div class="a" style="left:1723px;top:244px;width:41px;height:18px;background:#00a65a;border-radius:3px"></div>
<div class="a t" style="left:1723px;top:248px;width:41px;text-align:center;font-size:10px;color:#fff;font-weight:bold">Active</div>
<div class="a" style="left:1793px;top:241px;width:73.5px;height:34px;background:#3c8dbc;border:1px solid #367fa9;border-radius:3px"></div>
<div class="a t" style="left:1806px;top:252px;font-size:13px;color:#fff;font-weight:normal;">Action</div>
<svg class="a" style="left:1847px;top:258px;" width="7.5" height="4.5" viewBox="0 0 8 5"><path d="M0 0h8L4 4.5z" fill="#fff"/></svg>
<div class="a" style="left:257px;top:289px;width:1637px;height:74px;background:#fff"></div>
<div class="a" style="left:257px;top:289px;width:1637px;height:1px;background:#f4f4f4"></div>
<div class="a" style="left:303px;top:289px;width:1px;height:74px;background:#f4f4f4"></div>
<div class="a" style="left:396.5px;top:289px;width:1px;height:74px;background:#f4f4f4"></div>
<div class="a" style="left:518px;top:289px;width:1px;height:74px;background:#f4f4f4"></div>
<div class="a" style="left:697px;top:289px;width:1px;height:74px;background:#f4f4f4"></div>
<div class="a" style="left:789.5px;top:289px;width:1px;height:74px;background:#f4f4f4"></div>
<div class="a" style="left:966.5px;top:289px;width:1px;height:74px;background:#f4f4f4"></div>
<div class="a" style="left:1099px;top:289px;width:1px;height:74px;background:#f4f4f4"></div>
<div class="a" style="left:1178.5px;top:289px;width:1px;height:74px;background:#f4f4f4"></div>
<div class="a" style="left:1362px;top:289px;width:1px;height:74px;background:#f4f4f4"></div>
<div class="a" style="left:1513px;top:289px;width:1px;height:74px;background:#f4f4f4"></div>
<div class="a" style="left:1640.5px;top:289px;width:1px;height:74px;background:#f4f4f4"></div>
<div class="a" style="left:1714.5px;top:289px;width:1px;height:74px;background:#f4f4f4"></div>
<div class="a" style="left:1784px;top:289px;width:1px;height:74px;background:#f4f4f4"></div>
<div class="a" style="left:269px;top:299px;width:22px;height:22px;border:1px solid #cfcfcf"></div>
<div class="a t" style="left:405px;top:301.5px;font-size:13px;color:#333;font-weight:normal;">IT0004</div>
<div class="a t" style="left:526.5px;top:301.5px;font-size:13px;color:#333;font-weight:normal;">Potatose</div>
<div class="a t" style="left:706px;top:301.5px;font-size:13px;color:#333;font-weight:normal;">####</div>
<div class="a t" style="left:798px;top:301.5px;font-size:13px;color:#333;font-weight:normal;">Vegetables</div>
<div class="a t" style="left:1108px;top:301.5px;font-size:13px;color:#333;font-weight:normal;">kilo gram</div>
<div class="a t" style="left:1187px;top:301.5px;font-size:13px;color:#333;font-weight:normal;">4.75</div>
<div class="a t" style="left:1371px;top:301.5px;font-size:13px;color:#333;font-weight:normal;">2</div>
<div class="a t" style="left:1522px;top:301.5px;font-size:13px;color:#333;font-weight:normal;">220.00</div>
<div class="a t" style="left:1649.5px;top:301.5px;font-size:13px;color:#333;font-weight:normal;">0</div>
<div class="a t" style="left:1649.5px;top:321.5px;font-size:13px;color:#333;font-weight:normal;">(0.00%)</div>
<div class="a" style="left:1723px;top:301px;width:41px;height:18px;background:#00a65a;border-radius:3px"></div>
<div class="a t" style="left:1723px;top:305px;width:41px;text-align:center;font-size:10px;color:#fff;font-weight:bold">Active</div>
<div class="a" style="left:1793px;top:298px;width:73.5px;height:34px;background:#3c8dbc;border:1px solid #367fa9;border-radius:3px"></div>
<div class="a t" style="left:1806px;top:309px;font-size:13px;color:#fff;font-weight:normal;">Action</div>
<svg class="a" style="left:1847px;top:315px;" width="7.5" height="4.5" viewBox="0 0 8 5"><path d="M0 0h8L4 4.5z" fill="#fff"/></svg>
<div class="a" style="left:257px;top:363px;width:1637px;height:74px;background:#f9f9f9"></div>
<div class="a" style="left:257px;top:363px;width:1637px;height:1px;background:#f4f4f4"></div>
<div class="a" style="left:303px;top:363px;width:1px;height:74px;background:#f4f4f4"></div>
<div class="a" style="left:396.5px;top:363px;width:1px;height:74px;background:#f4f4f4"></div>
<div class="a" style="left:518px;top:363px;width:1px;height:74px;background:#f4f4f4"></div>
<div class="a" style="left:697px;top:363px;width:1px;height:74px;background:#f4f4f4"></div>
<div class="a" style="left:789.5px;top:363px;width:1px;height:74px;background:#f4f4f4"></div>
<div class="a" style="left:966.5px;top:363px;width:1px;height:74px;background:#f4f4f4"></div>
<div class="a" style="left:1099px;top:363px;width:1px;height:74px;background:#f4f4f4"></div>
<div class="a" style="left:1178.5px;top:363px;width:1px;height:74px;background:#f4f4f4"></div>
<div class="a" style="left:1362px;top:363px;width:1px;height:74px;background:#f4f4f4"></div>
<div class="a" style="left:1513px;top:363px;width:1px;height:74px;background:#f4f4f4"></div>
<div class="a" style="left:1640.5px;top:363px;width:1px;height:74px;background:#f4f4f4"></div>
<div class="a" style="left:1714.5px;top:363px;width:1px;height:74px;background:#f4f4f4"></div>
<div class="a" style="left:1784px;top:363px;width:1px;height:74px;background:#f4f4f4"></div>
<div class="a" style="left:269px;top:373px;width:22px;height:22px;border:1px solid #cfcfcf"></div>
<div class="a t" style="left:405px;top:375.5px;font-size:13px;color:#333;font-weight:normal;">IT0003</div>
<div class="a t" style="left:526.5px;top:375.5px;font-size:13px;color:#333;font-weight:normal;">Rathna 80 P book</div>
<div class="a t" style="left:706px;top:375.5px;font-size:13px;color:#333;font-weight:normal;">Rathna</div>
<div class="a t" style="left:798px;top:375.5px;font-size:13px;color:#333;font-weight:normal;">Stationery</div>
<div class="a t" style="left:1108px;top:375.5px;font-size:13px;color:#333;font-weight:normal;">Unit</div>
<div class="a t" style="left:1187px;top:375.5px;font-size:13px;color:#333;font-weight:normal;">128.00</div>
<div class="a t" style="left:1371px;top:375.5px;font-size:13px;color:#333;font-weight:normal;">20</div>
<div class="a t" style="left:1522px;top:375.5px;font-size:13px;color:#333;font-weight:normal;">95.00</div>
<div class="a t" style="left:1649.5px;top:375.5px;font-size:13px;color:#333;font-weight:normal;">0</div>
<div class="a t" style="left:1649.5px;top:395.5px;font-size:13px;color:#333;font-weight:normal;">(0.00%)</div>
<div class="a" style="left:1723px;top:375px;width:41px;height:18px;background:#00a65a;border-radius:3px"></div>
<div class="a t" style="left:1723px;top:379px;width:41px;text-align:center;font-size:10px;color:#fff;font-weight:bold">Active</div>
<div class="a" style="left:1793px;top:372px;width:73.5px;height:34px;background:#3c8dbc;border:1px solid #367fa9;border-radius:3px"></div>
<div class="a t" style="left:1806px;top:383px;font-size:13px;color:#fff;font-weight:normal;">Action</div>
<svg class="a" style="left:1847px;top:389px;" width="7.5" height="4.5" viewBox="0 0 8 5"><path d="M0 0h8L4 4.5z" fill="#fff"/></svg>
<div class="a" style="left:257px;top:437px;width:1637px;height:86px;background:#fff"></div>
<div class="a" style="left:257px;top:437px;width:1637px;height:1px;background:#f4f4f4"></div>
<div class="a" style="left:303px;top:437px;width:1px;height:86px;background:#f4f4f4"></div>
<div class="a" style="left:396.5px;top:437px;width:1px;height:86px;background:#f4f4f4"></div>
<div class="a" style="left:518px;top:437px;width:1px;height:86px;background:#f4f4f4"></div>
<div class="a" style="left:697px;top:437px;width:1px;height:86px;background:#f4f4f4"></div>
<div class="a" style="left:789.5px;top:437px;width:1px;height:86px;background:#f4f4f4"></div>
<div class="a" style="left:966.5px;top:437px;width:1px;height:86px;background:#f4f4f4"></div>
<div class="a" style="left:1099px;top:437px;width:1px;height:86px;background:#f4f4f4"></div>
<div class="a" style="left:1178.5px;top:437px;width:1px;height:86px;background:#f4f4f4"></div>
<div class="a" style="left:1362px;top:437px;width:1px;height:86px;background:#f4f4f4"></div>
<div class="a" style="left:1513px;top:437px;width:1px;height:86px;background:#f4f4f4"></div>
<div class="a" style="left:1640.5px;top:437px;width:1px;height:86px;background:#f4f4f4"></div>
<div class="a" style="left:1714.5px;top:437px;width:1px;height:86px;background:#f4f4f4"></div>
<div class="a" style="left:1784px;top:437px;width:1px;height:86px;background:#f4f4f4"></div>
<div class="a" style="left:269px;top:447px;width:22px;height:22px;border:1px solid #cfcfcf"></div>
<div class="a t" style="left:405px;top:449.5px;font-size:13px;color:#333;font-weight:normal;">IT0002</div>
<div class="a t" style="left:526.5px;top:449.5px;font-size:13px;color:#333;font-weight:normal;">Atlas 80 P book</div>
<div class="a t" style="left:706px;top:449.5px;font-size:13px;color:#333;font-weight:normal;">Atlas</div>
<div class="a t" style="left:798px;top:449.5px;font-size:13px;color:#333;font-weight:normal;">Stationery</div>
<div class="a t" style="left:1108px;top:449.5px;font-size:13px;color:#333;font-weight:normal;">Unit</div>
<div class="a t" style="left:1187px;top:449.5px;font-size:13px;color:#333;font-weight:normal;">41.00</div>
<div class="a t" style="left:1371px;top:449.5px;font-size:13px;color:#333;font-weight:normal;">20</div>
<div class="a t" style="left:1522px;top:449.5px;font-size:13px;color:#333;font-weight:normal;">90.00</div>
<div class="a t" style="left:1649.5px;top:449.5px;font-size:13px;color:#333;font-weight:normal;">0</div>
<div class="a t" style="left:1649.5px;top:469.5px;font-size:13px;color:#333;font-weight:normal;">(0.00%)</div>
<div class="a" style="left:1723px;top:449px;width:41px;height:18px;background:#00a65a;border-radius:3px"></div>
<div class="a t" style="left:1723px;top:453px;width:41px;text-align:center;font-size:10px;color:#fff;font-weight:bold">Active</div>
<div class="a" style="left:1793px;top:446px;width:73.5px;height:34px;background:#3c8dbc;border:1px solid #367fa9;border-radius:3px"></div>
<div class="a t" style="left:1806px;top:457px;font-size:13px;color:#fff;font-weight:normal;">Action</div>
<svg class="a" style="left:1847px;top:463px;" width="7.5" height="4.5" viewBox="0 0 8 5"><path d="M0 0h8L4 4.5z" fill="#fff"/></svg>
<div class="a" style="left:257px;top:523px;width:1637px;height:58px;background:#f9f9f9"></div>
<div class="a" style="left:257px;top:523px;width:1637px;height:1px;background:#f4f4f4"></div>
<div class="a" style="left:303px;top:523px;width:1px;height:58px;background:#f4f4f4"></div>
<div class="a" style="left:396.5px;top:523px;width:1px;height:58px;background:#f4f4f4"></div>
<div class="a" style="left:518px;top:523px;width:1px;height:58px;background:#f4f4f4"></div>
<div class="a" style="left:697px;top:523px;width:1px;height:58px;background:#f4f4f4"></div>
<div class="a" style="left:789.5px;top:523px;width:1px;height:58px;background:#f4f4f4"></div>
<div class="a" style="left:966.5px;top:523px;width:1px;height:58px;background:#f4f4f4"></div>
<div class="a" style="left:1099px;top:523px;width:1px;height:58px;background:#f4f4f4"></div>
<div class="a" style="left:1178.5px;top:523px;width:1px;height:58px;background:#f4f4f4"></div>
<div class="a" style="left:1362px;top:523px;width:1px;height:58px;background:#f4f4f4"></div>
<div class="a" style="left:1513px;top:523px;width:1px;height:58px;background:#f4f4f4"></div>
<div class="a" style="left:1640.5px;top:523px;width:1px;height:58px;background:#f4f4f4"></div>
<div class="a" style="left:1714.5px;top:523px;width:1px;height:58px;background:#f4f4f4"></div>
<div class="a" style="left:1784px;top:523px;width:1px;height:58px;background:#f4f4f4"></div>
<div class="a" style="left:269px;top:533px;width:22px;height:22px;border:1px solid #cfcfcf"></div>
<div class="a t" style="left:405px;top:535.5px;font-size:13px;color:#333;font-weight:normal;">IT0001</div>
<div class="a t" style="left:526.5px;top:535.5px;font-size:13px;color:#333;font-weight:normal;">Chooty Pen</div>
<div class="a t" style="left:706px;top:535.5px;font-size:13px;color:#333;font-weight:normal;">Atlas</div>
<div class="a t" style="left:798px;top:535.5px;font-size:13px;color:#333;font-weight:normal;">Stationery</div>
<div class="a t" style="left:1108px;top:535.5px;font-size:13px;color:#333;font-weight:normal;">Units</div>
<div class="a t" style="left:1187px;top:535.5px;font-size:13px;color:#333;font-weight:normal;">45.00</div>
<div class="a t" style="left:1371px;top:535.5px;font-size:13px;color:#333;font-weight:normal;">20</div>
<div class="a t" style="left:1522px;top:535.5px;font-size:13px;color:#333;font-weight:normal;">25.00</div>
<div class="a t" style="left:1649.5px;top:535.5px;font-size:13px;color:#333;font-weight:normal;">0</div>
<div class="a t" style="left:1649.5px;top:555.5px;font-size:13px;color:#333;font-weight:normal;">(0.00%)</div>
<div class="a" style="left:1723px;top:535px;width:41px;height:18px;background:#00a65a;border-radius:3px"></div>
<div class="a t" style="left:1723px;top:539px;width:41px;text-align:center;font-size:10px;color:#fff;font-weight:bold">Active</div>
<div class="a" style="left:1793px;top:532px;width:73.5px;height:34px;background:#3c8dbc;border:1px solid #367fa9;border-radius:3px"></div>
<div class="a t" style="left:1806px;top:543px;font-size:13px;color:#fff;font-weight:normal;">Action</div>
<svg class="a" style="left:1847px;top:549px;" width="7.5" height="4.5" viewBox="0 0 8 5"><path d="M0 0h8L4 4.5z" fill="#fff"/></svg>
<div class="a" style="left:312px;top:241px;width:57px;height:39px;background:#fff;border:1px solid #6b9ac0"></div>
<svg class="a" style="left:312px;top:241px;" width="57" height="39" viewBox="0 0 57 39"><defs><linearGradient id="cg" x1="0" y1="0" x2="0" y2="1"><stop offset="0" stop-color="#f59a4c"/><stop offset=".55" stop-color="#e8701f"/><stop offset="1" stop-color="#cf5c14"/></linearGradient></defs><path d="M46.0 8.0Q43.7 16.8 44.8 21.7A5.5 5.5 0 0 0 55.2 18.3Q53.1 13.6 46.0 8.0z" fill="url(#cg)" stroke="#c95a12" stroke-width=".5"/><path d="M4.0 16.0Q28.2 15.7 43.9 13.2A4.8 4.8 0 0 0 42.1 3.8Q26.6 7.3 4.0 16.0z" fill="url(#cg)" stroke="#c95a12" stroke-width=".5"/><path d="M7.0 20.0Q27.3 21.6 40.5 20.5A4.5 4.5 0 0 0 39.5 11.5Q26.3 13.6 7.0 20.0z" fill="url(#cg)" stroke="#c95a12" stroke-width=".5"/><path d="M40.0 22.0Q42.8 28.4 45.8 30.5A5.0 5.0 0 0 0 50.2 21.5Q46.8 20.4 40.0 22.0z" fill="url(#cg)" stroke="#c95a12" stroke-width=".5"/><path d="M11.0 22.0Q25.2 29.1 35.1 31.5A4.6 4.6 0 0 0 36.9 22.5Q26.8 20.9 11.0 22.0z" fill="url(#cg)" stroke="#c95a12" stroke-width=".5"/></svg>
<div class="a" style="left:312px;top:298px;width:57px;height:57px;background:#fff;border:1px solid #6b9ac0"></div>
<svg class="a" style="left:312px;top:298px;" width="57" height="57" viewBox="0 0 57 57"><defs><radialGradient id="pg" cx=".42" cy=".38" r=".7"><stop offset="0" stop-color="#f4e0ae"/><stop offset=".65" stop-color="#e5c57f"/><stop offset="1" stop-color="#c9a35c"/></radialGradient></defs><ellipse cx="38" cy="26" rx="13" ry="16.5" transform="rotate(-25 38 26)" fill="url(#pg)"/><ellipse cx="21" cy="34.5" rx="17.5" ry="13.5" transform="rotate(10 21 34.5)" fill="url(#pg)"/></svg>
<div class="a" style="left:312px;top:372px;width:57px;height:57px;background:#fff;border:1px solid #6b9ac0"></div>
<svg class="a" style="left:312px;top:372px;" width="57" height="57" viewBox="0 0 57 57"><path d="M13 5.5L39 2.5 40 53 14 46z" fill="#d8343c"/><path d="M14.2 9.5L38.8 7 39.2 40.5 14.6 38z" fill="#5fae46"/><path d="M14.2 9.5L38.8 7 38.8 14 14.2 17z" fill="#a9d6a0"/><path d="M31 8l7.8-1 .2 22-4 1-3-10z" fill="#6d5237"/><path d="M14.5 30c6-2 16-1 24.5 2v8.5L14.6 38z" fill="#3f8a35"/><ellipse cx="24.5" cy="27" rx="5" ry="6.5" fill="#77746a"/><circle cx="24.5" cy="21.5" r="3" fill="#8a877c"/><path d="M16 43l10 1.2" stroke="#f3c0c0" stroke-width=".8"/><rect x="34" y="44" width="4" height="4" fill="#fff"/></svg>
<div class="a" style="left:312px;top:446px;width:57px;height:68px;background:#fff;border:1px solid #6b9ac0"></div>
<svg class="a" style="left:312px;top:446px;" width="57" height="68" viewBox="0 0 57 68"><defs><linearGradient id="sh" x1="0" y1="0" x2="0" y2="1"><stop offset="0" stop-color="#aaa"/><stop offset="1" stop-color="#fff"/></linearGradient><clipPath id="bk2"><path d="M11.5 12L46.5 7 45.7 56 10.7 60.6z"/></clipPath></defs><path d="M9 59l37-5 2 5-36 6z" fill="url(#sh)" opacity=".7"/><path d="M11.5 12L46.5 7 45.7 56 10.7 60.6z" fill="#e3623a"/><g clip-path="url(#bk2)"><g stroke="#2fa5b5" stroke-width="4" fill="none" stroke-linejoin="miter"><path d="M8 20h10v8h-6v8h10v-8h8v10h-8v10h10v-8h8v10"/><path d="M22 8v8h10v-6h8v10h-8v8h10v-8h8"/><path d="M10 48h8v8h10v-6"/></g><g stroke="#f5efe0" stroke-width="1.3" fill="none"><path d="M8 24h8v8h-2v6h10v-8h8v10h-8v10h10v-8h8v10"/><path d="M26 8v6h8v-6h8v14"/></g><path d="M30 20h6v6h-6zM14 40h5v5h-5zM38 44h5v5h-5z" fill="#e8cf4a"/><path d="M40 7l7 0 0 6-7 2z" fill="#f08040"/></g><circle cx="15.5" cy="14.5" r="2.8" fill="#fff"/></svg>
<div class="a" style="left:312px;top:532px;width:57px;height:24px;background:#fff;border:1px solid #6b9ac0"></div>
<svg class="a" style="left:312px;top:532px;" width="57" height="24" viewBox="0 0 57 24"><path d="M4 4L52 14.5" stroke="#c9cbd6" stroke-width="2.6" stroke-linecap="round"/><path d="M4 4L30 9.5" stroke="#2b2f4a" stroke-width="2.4" stroke-linecap="round"/><path d="M3 10.5L54 15.5" stroke="#d8c8c0" stroke-width="2.8" stroke-linecap="round"/><path d="M3 10.5L24 12.5" stroke="#cf4a4a" stroke-width="2.8" stroke-linecap="round"/><path d="M30 13L54 15.5" stroke="#b06a50" stroke-width="1" /><path d="M3 17L54 17" stroke="#c8ccd8" stroke-width="3" stroke-linecap="round"/><path d="M3 17L14 17" stroke="#1f2f5a" stroke-width="3"/><path d="M48 17L54 17" stroke="#1f2f5a" stroke-width="3" stroke-linecap="round"/><path d="M20 16.6L46 16.6" stroke="#556" stroke-width=".7"/><text x="34.5" y="8.6" font-size="6.2" font-weight="bold" fill="#34508a" font-family="Liberation Sans" textLength="16">chooty</text></svg>
<div class="a t" style="left:256px;top:599px;font-size:13px;color:#333;font-weight:normal;">Showing 11 to 15 of 15 entries</div>
<div class="a" style="left:1703.5px;top:617px;width:191px;height:34px;background:#fff;border:1px solid #ddd;border-radius:3px"></div>
<div class="a" style="left:1704.5px;top:618px;width:75px;height:32px;background:#fafafa"></div>
<div class="a" style="left:1779.4px;top:618px;width:1px;height:32px;background:#ddd"></div>
<div class="a" style="left:1780.4px;top:618px;width:29.6px;height:32px;background:#fafafa"></div>
<div class="a" style="left:1810px;top:617px;width:33px;height:34px;background:#337ab7"></div>
<div class="a t" style="left:1716px;top:628px;font-size:13px;color:#777;font-weight:normal;">Previous</div>
<div class="a t" style="left:1791px;top:628px;font-size:13px;color:#555;font-weight:normal;">1</div>
<div class="a t" style="left:1822px;top:628px;font-size:13px;color:#fff;font-weight:normal;">2</div>
<div class="a t" style="left:1855px;top:628px;font-size:13px;color:#777;font-weight:normal;">Next</div>
<div class="a" style="left:231px;top:910px;width:1689px;height:49px;background:#fff;border-top:1px solid #d2d6de"></div>
<div class="a t" style="left:246px;top:930px;font-size:13px;color:#444;font-weight:bold;">Copyright &copy; 2024 All rights reserved.</div>
<div class="a t" style="left:1861px;top:930px;font-size:13px;color:#444;font-weight:bold;">Store X</div></body></html>
